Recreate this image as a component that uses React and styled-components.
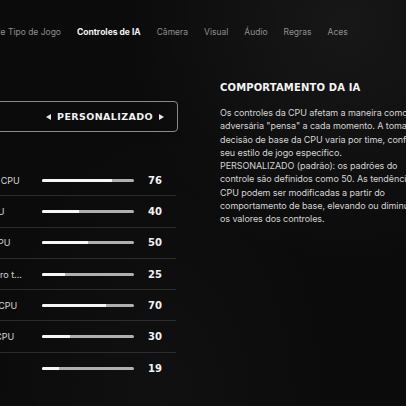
import React from 'react';
import styled, { createGlobalStyle } from 'styled-components';

const GlobalStyle = createGlobalStyle`
  html, body {
    margin: 0;
    padding: 0;
    background: #0b0b0b;
  }
  body {
    font-family: Inter, 'Open Sans', sans-serif;
    overflow: hidden;
  }
`;

const Screen = styled.div`
  width: 406px;
  height: 406px;
  overflow: hidden;
  background:
    radial-gradient(ellipse at 85% 5%, rgba(255, 255, 255, 0.05), transparent 45%),
    radial-gradient(ellipse at 40% 100%, rgba(255, 255, 255, 0.025), transparent 50%),
    #0b0b0b;
  color: #fff;
`;

const Nav = styled.nav`
  height: 64px;
  width: 348px;
  overflow: hidden;
  display: flex;
  align-items: center;
`;

const Tabs = styled.div`
  display: flex;
  align-items: center;
  gap: 16px;
  margin-left: -35px;
  white-space: nowrap;
`;

const Tab = styled.span`
  font-size: 8.5px;
  font-weight: ${p => (p.$active ? 700 : 400)};
  color: ${p => (p.$active ? '#f4f4f4' : '#8e8e8e')};
`;

const Main = styled.main`
  display: flex;
  gap: 42px;
`;

const LeftColumn = styled.section`
  flex: 0 0 258px;
  margin-left: -80px;
  padding-top: 37px;
`;

const Selector = styled.div`
  height: 31px;
  box-sizing: border-box;
  border: 1px solid #8a8a8a;
  border-radius: 4px;
  display: flex;
  align-items: center;
  justify-content: flex-end;
  gap: 6px;
  padding-right: 13px;
`;

const SelectorValue = styled.span`
  font-family: 'DejaVu Sans', sans-serif;
  font-weight: 700;
  font-size: 9.5px;
  letter-spacing: 0.4px;
  color: #f2f2f2;
`;

const Arrow = ({ dir }) => (
  <svg width="5" height="6" viewBox="0 0 5 6">
    <path d={dir === 'left' ? 'M5 0 L0 3 L5 6 Z' : 'M0 0 L5 3 L0 6 Z'} fill="#e8e8e8" />
  </svg>
);

const Rows = styled.div`
  margin-top: 33px;
  width: 256px;
`;

const Row = styled.div`
  height: 31.3px;
  box-sizing: border-box;
  display: flex;
  align-items: center;
  border-bottom: ${p => (p.$last ? 'none' : '1px solid #2c2c2c')};
`;

const Label = styled.span`
  flex: 0 0 104px;
  overflow: hidden;
  white-space: nowrap;
  text-overflow: ellipsis;
  font-size: 9px;
  color: #d6d6d6;
`;

const Track = styled.div`
  flex: 0 0 92px;
  height: 3px;
  margin-left: 18px;
  border-radius: 2px;
  background: #b0b0b0;
  overflow: hidden;
`;

const Fill = styled.div`
  height: 100%;
  background: #f6f6f6;
`;

const Value = styled.span`
  margin-left: 14px;
  font-family: 'DejaVu Sans', sans-serif;
  font-weight: 700;
  font-size: 10px;
  color: #f2f2f2;
`;

const RightColumn = styled.section`
  flex: 0 0 260px;
  padding-top: 17px;
`;

const Title = styled.h2`
  margin: 0;
  font-family: 'DejaVu Sans', sans-serif;
  font-weight: 700;
  font-size: 10px;
  line-height: 14px;
  letter-spacing: 0.15px;
  color: #f4f4f4;
`;

const Body = styled.p`
  margin: 11px 0 0;
  font-size: 9px;
  line-height: 13.3px;
  letter-spacing: -0.08px;
  color: #d4d4d4;
  white-space: pre-line;
`;

const tabs = [
  'Regras de Tipo de Jogo',
  'Controles de IA',
  'Câmera',
  'Visual',
  'Áudio',
  'Regras',
  'Acessibilidade',
];

const sliders = [
  { label: 'Pressão defensiva CPU', value: 76 },
  { label: 'Ritmo ofensivo CPU', value: 40 },
  { label: 'Passes verticais CPU', value: 50 },
  { label: 'Chutes com primeiro toque CPU', value: 25 },
  { label: 'Marcação intensa CPU', value: 70 },
  { label: 'Dribles e truques CPU', value: 30 },
  { label: 'Velocidade', value: 19 },
];

const description = `Os controles da CPU afetam a maneira como a IA
adversária "pensa" a cada momento. A tomada de
decisão de base da CPU varia por time, conforme o
seu estilo de jogo específico.
PERSONALIZADO (padrão): os padrões do
controle são definidos como 50. As tendências da
CPU podem ser modificadas a partir do
comportamento de base, elevando ou diminuindo
os valores dos controles.`;

export default function App() {
  return (
    <Screen>
      <GlobalStyle />
      <Nav>
        <Tabs>
          {tabs.map(t => (
            <Tab key={t} $active={t === 'Controles de IA'}>{t}</Tab>
          ))}
        </Tabs>
      </Nav>
      <Main>
        <LeftColumn>
          <Selector>
            <Arrow dir="left" />
            <SelectorValue>PERSONALIZADO</SelectorValue>
            <Arrow dir="right" />
          </Selector>
          <Rows>
            {sliders.map((s, i) => (
              <Row key={s.label} $last={i === sliders.length - 1}>
                <Label>{s.label}</Label>
                <Track>
                  <Fill style={{ width: `${s.value}%` }} />
                </Track>
                <Value>{s.value}</Value>
              </Row>
            ))}
          </Rows>
        </LeftColumn>
        <RightColumn>
          <Title>COMPORTAMENTO DA IA</Title>
          <Body>{description}</Body>
        </RightColumn>
      </Main>
    </Screen>
  );
}
